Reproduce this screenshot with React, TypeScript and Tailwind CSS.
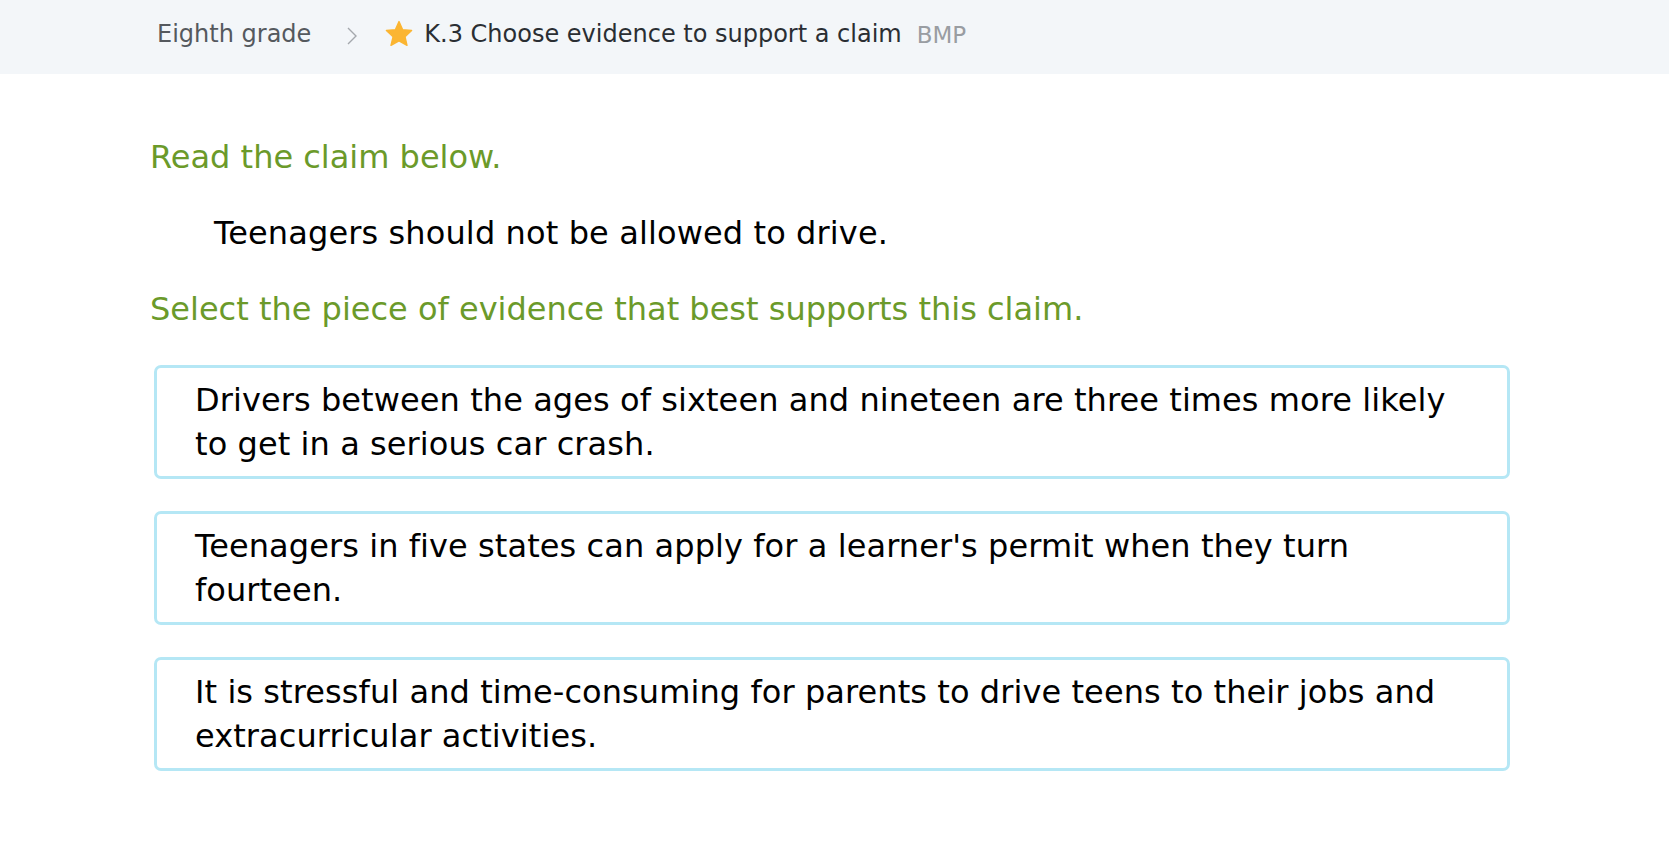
import React from "react";

const font = { fontFamily: '"DejaVu Sans", Verdana, sans-serif' };

function Star() {
  return (
    <svg width="28" height="27" viewBox="-1 -1 28 27" className="shrink-0">
      <path
        d="M13 0.6L16.64 8.68 25.6 9.5 19 15.62 21 24.3 13 19.9 5 24.3 7.1 15.62 0.4 9.5 9.36 8.68Z"
        fill="#fbb532"
        stroke="#fbb532"
        strokeWidth="1.4"
        strokeLinejoin="round"
      />
    </svg>
  );
}

function Chevron() {
  return (
    <svg width="10" height="18" viewBox="0 0 10 18" className="shrink-0">
      <path d="M1 1l8 8-8 8" fill="none" stroke="#a4a8ad" strokeWidth="1.4" />
    </svg>
  );
}

const answers = [
  "Drivers between the ages of sixteen and nineteen are three times more likely to get in a serious car crash.",
  "Teenagers in five states can apply for a learner's permit when they turn fourteen.",
  "It is stressful and time-consuming for parents to drive teens to their jobs and extracurricular activities.",
];

export default function App() {
  return (
    <div className="min-h-[842px] w-full bg-white" style={font}>
      <header className="flex h-[74px] items-center bg-[#f3f6f9] pb-[7px] pl-[157px]">
        <span className="text-[24px] leading-[30px] text-[#55595e]">Eighth grade</span>
        <span className="ml-[36px] mt-[4px]">
          <Chevron />
        </span>
        <span className="ml-[28px]">
          <Star />
        </span>
        <span className="ml-[11px] text-[24px] leading-[30px] text-[#2a2e33]">
          K.3 Choose evidence to support a claim
        </span>
        <span className="ml-[15px] mt-[3px] text-[23px] leading-[30px] text-[#999da2]">BMP</span>
      </header>

      <main className="pl-[150px] pt-[61px]">
        <p className="text-[32px] leading-[44px] text-[#6b9a2a]">Read the claim below.</p>
        <p className="mt-[32px] pl-[64px] text-[32px] leading-[44px] tracking-[0.12px] text-black">
          Teenagers should not be allowed to drive.
        </p>
        <p className="mt-[32px] text-[32px] leading-[44px] text-[#6b9a2a]">
          Select the piece of evidence that best supports this claim.
        </p>
        <div className="ml-[4px] mt-[34px] flex w-[1356px] flex-col gap-[32px]">
          {answers.map((a) => (
            <div
              key={a}
              className="rounded-[7px] border-[3px] border-[#b5e7f5] bg-white px-[38px] py-[10px] text-[32px] leading-[44px] tracking-[0.08px] text-black"
            >
              {a}
            </div>
          ))}
        </div>
      </main>
    </div>
  );
}
